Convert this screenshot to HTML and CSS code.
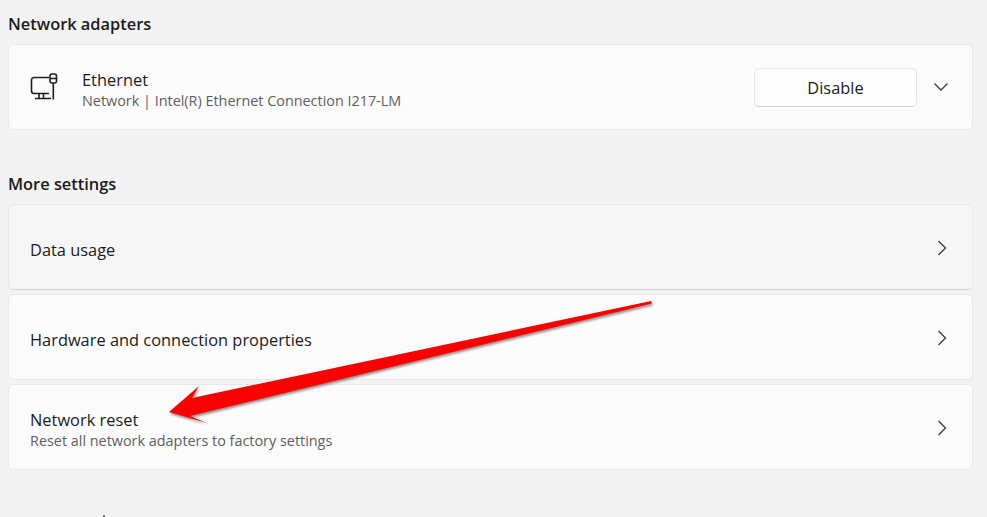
FILE: index.html
```html
<!DOCTYPE html>
<html lang="en">
<head>
<meta charset="UTF-8">
<meta name="viewport" content="width=device-width, initial-scale=1.0">
<title>Advanced network settings</title>
<link rel="stylesheet" href="styles.css">
</head>
<body>
<h2 class="section-title first">Network adapters</h2>
<div class="card">
    <svg class="adapter-icon" width="28" height="28" viewBox="0 0 28 28" fill="none" stroke="#1f1f1f" stroke-width="1.6">
        <path d="M19 4.500H4A2.500 2.500 0 0 0 1.500 7V18A2.500 2.500 0 0 0 4 20.500H19"/>
        <path d="M9 20.500V25.500M13.500 20.500V25.500M5 25.500H21"/>
        <rect x="20" y="1" width="6.500" height="9" rx="2"/>
        <path d="M20 5.500H26.500M23.300 10V26.500"/>
    </svg>
    <div class="card-text">
        <div class="card-title">Ethernet</div>
        <div class="card-sub">Network | Intel(R) Ethernet Connection I217-LM</div>
    </div>
    <button class="disable-button">Disable</button>
    <svg class="chevron-down" width="16" height="16" viewBox="0 0 16 16" fill="none" stroke="#3a3a3a" stroke-width="1.300">
        <path d="M1.500 4.500L8 11L14.500 4.500"/>
    </svg>
</div>

<h2 class="section-title">More settings</h2>
<div class="card-list">
    <div class="card grey">
        <div class="card-text">
            <div class="card-title">Data usage</div>
        </div>
        <svg class="chevron" width="16" height="16" viewBox="0 0 16 16" fill="none" stroke="#3a3a3a" stroke-width="1.300">
            <path d="M4.500 1L11.500 8L4.500 15"/>
        </svg>
    </div>
    <div class="card">
        <div class="card-text">
            <div class="card-title">Hardware and connection properties</div>
        </div>
        <svg class="chevron" width="16" height="16" viewBox="0 0 16 16" fill="none" stroke="#3a3a3a" stroke-width="1.300">
            <path d="M4.500 1L11.500 8L4.500 15"/>
        </svg>
    </div>
    <div class="card">
        <div class="card-text">
            <div class="card-title">Network reset</div>
            <div class="card-sub">Reset all network adapters to factory settings</div>
        </div>
        <svg class="chevron" width="16" height="16" viewBox="0 0 16 16" fill="none" stroke="#3a3a3a" stroke-width="1.300">
            <path d="M4.500 1L11.500 8L4.500 15"/>
        </svg>
    </div>
</div>
<div class="cut-text"></div>

<!-- flecha roja encima de las tarjetas -->
<svg class="red-arrow" width="987" height="517" viewBox="0 0 987 517">
    <polygon class="arrow-fill" points="651,301 192,398 199,386 169,412 207,423 190,416 652,303.500"/>
</svg>
</body>
</html>
```
FILE: styles.css
```css
body {
    margin: 0;
    height: 517px;
    overflow: hidden;
    background-color: #f3f3f3;
    font-family: "Open Sans", "Noto Sans", sans-serif;
    color: #1b1b1b;
}

.section-title {
    margin: 0;
    padding: 43px 8px 9px;
    height: 22px;
    font-size: 16.400px;
    line-height: 22px;
    font-weight: 600;
}

.section-title.first {
    padding-top: 13px;
}

.card {
    box-sizing: border-box;
    display: flex;
    align-items: center;
    width: 965px;
    height: 86px;
    margin-left: 8px;
    padding: 0 22px 0 21px;
    background-color: #fbfbfb;
    border: 1px solid #e8e8e8;
    border-radius: 5px;
}

.card.grey {
    background-color: #f6f6f6;
    border-bottom-color: #d4d4d4;
}

.card-list {
    display: flex;
    flex-direction: column;
    gap: 4px;
}

.adapter-icon {
    margin-right: 24px;
}

.card-text {
    flex: 1;
    padding-top: 5px;
}

.card-title {
    font-size: 16.400px;
    line-height: 22px;
}

.card-sub {
    font-size: 14.400px;
    line-height: 20px;
    color: #5f5f5f;
}

.disable-button {
    width: 163px;
    height: 39px;
    margin: 1px 16px 0 0;
    background-color: #fefefe;
    border: 1px solid #e6e6e6;
    border-bottom-color: #cfcfcf;
    border-radius: 5px;
    font-family: inherit;
    font-size: 16.400px;
    color: #1b1b1b;
}

.chevron {
    margin-top: 2px;
}

.chevron-down {
    margin-right: 1px;
}

/* lo poco que se ve del siguiente titulo, cortado por la ventana */
.cut-text {
    width: 2px;
    height: 2px;
    margin: 45px 0 0 103px;
    background-color: #777;
}

.red-arrow {
    position: absolute;
    top: 0;
    left: 0;
}

.arrow-fill {
    fill: #fb0000;
    filter: drop-shadow(1px 2px 1px rgba(90, 70, 70, 0.6));
}
```
